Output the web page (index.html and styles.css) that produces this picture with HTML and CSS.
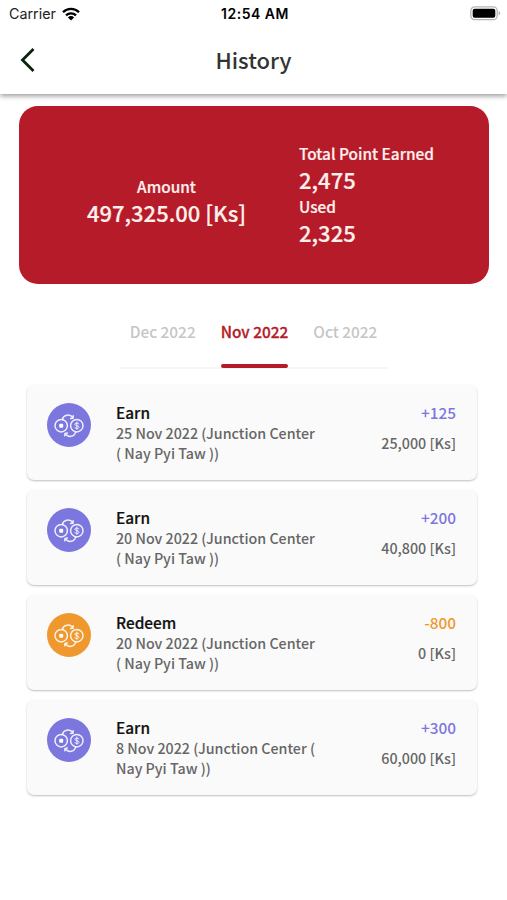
FILE: index.html
```html
<!DOCTYPE html>
<html lang="en">
<head>
  <meta charset="UTF-8" />
  <meta name="viewport" content="width=device-width, initial-scale=1.0"/>
  <title>History</title>
  <link rel="stylesheet" href="styles.css">
</head>
<body>

<!-- Shared coins icon -->
<svg class="defs" width="0" height="0">
  <symbol id="coins" viewBox="0 0 44 44">
    <g fill="none" stroke="#fff" stroke-opacity=".88" stroke-width="1.5" stroke-linecap="round" stroke-linejoin="round">
      <circle cx="14.200" cy="22.700" r="6.200"/>
      <circle cx="29.800" cy="22.700" r="6.200"/>
      <path d="M15.500 16.300c1-4.800 7.500-5.700 10.300-1.400M23.600 15.600l2.400-.4.200-2.400"/>
      <path d="M28.500 29.200c-1 4.800-7.500 5.700-10.300 1.400M20.400 30l-2.400.4-.2 2.400"/>
      <path stroke-width="1" d="M32 21c-.6-1.300-4.200-1.300-4.200.3 0 1.800 4.200 1 4.200 2.900 0 1.600-3.600 1.700-4.300.2M29.900 19v7.400"/>
    </g>
    <rect x="12.200" y="20.700" width="4" height="4" rx="1" fill="#fff"/>
  </symbol>
</svg>

<header>
  <div class="status-bar">
    <div class="carrier">
      <span>Carrier</span>
      <svg width="18" height="14" viewBox="0 0 18 14">
        <g fill="none" stroke="#000" stroke-width="2.300">
          <path d="M1 5.200a11.400 11.400 0 0 1 16 0"/>
          <path d="M4 8.300a7.200 7.200 0 0 1 10 0"/>
        </g>
        <path d="M9 13.600L5.900 10.400a4.400 4.400 0 0 1 6.200 0z"/>
      </svg>
    </div>
    <div class="time">12:54 AM</div>
    <div class="battery">
      <svg width="31" height="15" viewBox="0 0 31 15">
        <rect x=".8" y=".8" width="26.400" height="12.900" rx="4" fill="#fff" stroke="#b5b5b5" stroke-width="1.300"/>
        <rect x="2.700" y="2.700" width="22.600" height="9.100" rx="2"/>
        <path d="M28.600 5c2.200.8 2.200 3.700 0 4.500z" fill="#b5b5b5"/>
      </svg>
    </div>
  </div>
  <div class="title-bar">
    <svg class="back" width="16" height="26" viewBox="0 0 16 26">
      <path d="M13.500 2L2.500 13l11 11" fill="none" stroke="#08240f" stroke-width="2.800"/>
    </svg>
    <h1>History</h1>
  </div>
</header>

<section class="summary">
  <div class="amount">
    <div class="label">Amount</div>
    <div class="value">497,325.00 [Ks]</div>
  </div>
  <div class="points">
    <div class="label">Total Point Earned</div>
    <div class="value">2,475</div>
    <div class="label">Used</div>
    <div class="value">2,325</div>
  </div>
</section>

<nav class="tabs">
  <div class="tab">Dec 2022</div>
  <div class="tab active">Nov 2022</div>
  <div class="tab">Oct 2022</div>
</nav>

<main class="history-list">
  <div class="history-card earn">
    <svg class="icon"><use href="#coins"/></svg>
    <div class="details">
      <h3>Earn</h3>
      <p>25 Nov 2022 (Junction Center<br/>( Nay Pyi Taw ))</p>
    </div>
    <div class="numbers">
      <div class="change">+125</div>
      <div class="total">25,000 [Ks]</div>
    </div>
  </div>
  <div class="history-card earn">
    <svg class="icon"><use href="#coins"/></svg>
    <div class="details">
      <h3>Earn</h3>
      <p>20 Nov 2022 (Junction Center<br/>( Nay Pyi Taw ))</p>
    </div>
    <div class="numbers">
      <div class="change">+200</div>
      <div class="total">40,800 [Ks]</div>
    </div>
  </div>
  <div class="history-card redeem">
    <svg class="icon"><use href="#coins"/></svg>
    <div class="details">
      <h3>Redeem</h3>
      <p>20 Nov 2022 (Junction Center<br/>( Nay Pyi Taw ))</p>
    </div>
    <div class="numbers">
      <div class="change">-800</div>
      <div class="total">0 [Ks]</div>
    </div>
  </div>
  <div class="history-card earn">
    <svg class="icon"><use href="#coins"/></svg>
    <div class="details">
      <h3>Earn</h3>
      <p>8 Nov 2022 (Junction Center (<br/>Nay Pyi Taw ))</p>
    </div>
    <div class="numbers">
      <div class="change">+300</div>
      <div class="total">60,000 [Ks]</div>
    </div>
  </div>
</main>

</body>
</html>
```

FILE: styles.css
```css
* {
  box-sizing: border-box;
}

body {
  font-family: "Noto Sans CJK JP", "Noto Sans", sans-serif;
  font-weight: 500;
  margin: 0;
  padding: 0;
  min-height: 100vh;
  background-color: #fff;
}

h1, h3, p {
  margin: 0;
}

svg {
  display: block;
}

.defs {
  position: absolute;
}

header {
  height: 94px;
  background-color: #fff;
  box-shadow: 0 2px 5px rgba(0,0,0,0.4);
}

.status-bar {
  display: grid;
  grid-template-columns: 1fr auto 1fr;
  align-items: center;
  height: 27px;
  padding: 0 6px 0 9px;
  font-family: Inter, "Liberation Sans", sans-serif;
}

.carrier {
  display: flex;
  align-items: center;
  gap: 6px;
  font-size: 14.3px;
  font-weight: 400;
  color: #222;
}

.time {
  font-size: 14px;
  font-weight: 600;
  letter-spacing: 0.5px;
}

.battery {
  justify-self: end;
}

.title-bar {
  display: grid;
  grid-template-columns: 1fr auto 1fr;
  align-items: center;
  height: 65px;
  padding: 0 20px;
}

h1 {
  font-size: 22px;
  font-weight: 500;
  line-height: 30px;
  margin-bottom: 2px;
  color: #333;
}

.summary {
  display: flex;
  align-items: center;
  height: 178px;
  margin: 12px 18px 0 19px;
  border-radius: 19px;
  background-color: #b51b28;
  color: #fff0ee;
  -webkit-text-stroke: 0.2px #fff0ee;
}

.amount {
  width: 280px;
  padding: 10px 0 0 15px;
  text-align: center;
}

.points {
  padding-bottom: 2px;
}

.label {
  font-size: 15.4px;
  line-height: 24px;
}

.value {
  font-size: 22px;
  line-height: 29px;
}

.tabs {
  display: flex;
  justify-content: center;
  gap: 25px;
  width: 268px;
  height: 54px;
  margin: 31px auto 0;
  border-bottom: 2px solid #f7f7f7;
}

.tab {
  height: 53px;
  font-size: 15.4px;
  line-height: 32px;
  color: #c6c6c6;
  white-space: nowrap;
}

.tab.active {
  color: #b51b28;
  position: relative;
  -webkit-text-stroke: 0.3px #b51b28;
}

.tab.active::after {
  content: "";
  position: absolute;
  left: 0;
  right: 0;
  bottom: 0;
  height: 4px;
  border-radius: 2px;
  background-color: #b51b28;
}

.history-list {
  display: flex;
  flex-direction: column;
  gap: 10px;
  margin: 16px 30px 0 27px;
}

.history-card {
  display: flex;
  height: 95px;
  padding: 17px 21px 0 20px;
  border-radius: 7px;
  background-color: #fafafa;
  box-shadow: 0 1px 2px rgba(0,0,0,0.25);
}

.icon {
  width: 44px;
  height: 44px;
  margin-top: 1px;
  border-radius: 50%;
}

.earn .icon {
  background-color: #7b77df;
}

.redeem .icon {
  background-color: #ef982d;
}

.details {
  flex: 1;
  padding-left: 25px;
}

.details h3 {
  font-size: 15.4px;
  font-weight: 500;
  line-height: 20px;
  color: #111;
  -webkit-text-stroke: 0.2px #111;
}

.details p {
  margin-top: 1px;
  font-size: 14.25px;
  line-height: 19.5px;
  color: #666;
  white-space: nowrap;
}

.numbers {
  text-align: right;
}

.change {
  font-size: 15.4px;
  line-height: 20px;
}

.earn .change {
  color: #7b77df;
}

.redeem .change {
  color: #ef982d;
}

.total {
  margin-top: 11px;
  font-size: 14.3px;
  line-height: 20px;
  color: #666;
}
```
